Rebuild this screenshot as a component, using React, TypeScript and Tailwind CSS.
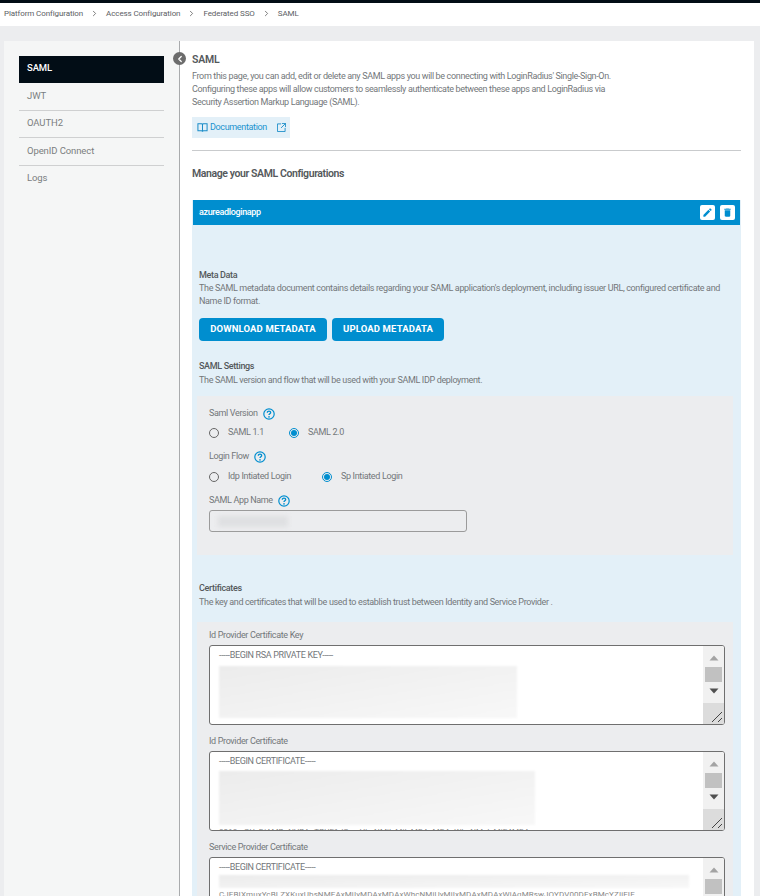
import React from "react";
import { ChevronRight, ChevronLeft } from "lucide-react";

const Help = () => (
  <svg width="12" height="12" viewBox="0 0 12 12" fill="none" className="shrink-0">
    <circle cx="6" cy="6" r="5.2" stroke="#008ecf" strokeWidth="1.2" />
    <path d="M4.300 4.700c0-1 .7-1.600 1.700-1.600s1.700.6 1.700 1.400c0 1.200-1.700 1.300-1.700 2.500" stroke="#008ecf" strokeWidth="1.3" />
    <circle cx="6" cy="8.900" r=".8" fill="#008ecf" />
  </svg>
);

const Radio = ({ label, checked, w }: { label: string; checked?: boolean; w: string }) => (
  <div className={`flex items-center gap-[9px] ${w}`}>
    <span className={`flex h-[10px] w-[10px] shrink-0 items-center justify-center rounded-full border ${checked ? "border-[#008ecf]" : "border-[#666]"}`}>
      {checked && <span className="h-[6px] w-[6px] rounded-full bg-[#008ecf]" />}
    </span>
    <span>{label}</span>
  </div>
);

const Arrow = ({ up, dark }: { up?: boolean; dark?: boolean }) => (
  <svg width="10" height="6" viewBox="0 0 10 6">
    <path d={up ? "M5 0.5 9.500 5.500H.5Z" : "M.5.5H9.500L5 5.500Z"} fill={dark ? "#505050" : "#a3a3a3"} />
  </svg>
);

const Scroll = ({ corner = true }: { corner?: boolean }) => (
  <div className="flex w-[21px] shrink-0 flex-col bg-[#f1f1f1]">
    <div className="flex h-[21px] shrink-0 items-center justify-center pt-[3px]"><Arrow up /></div>
    <div className="mx-auto h-[15px] w-[17px] shrink-0 bg-[#c1c1c1]" />
    <div className="flex h-[21px] shrink-0 items-center justify-center pb-[3px]"><Arrow dark /></div>
    <div className="flex-1" />
    {corner && (
      <div className="flex h-[21px] shrink-0 items-end justify-end bg-[#dcdcdc] p-[1px]">
        <svg width="12" height="12" viewBox="0 0 12 12" fill="none" stroke="#444" strokeWidth="1">
          <path d="M1 11 11 1M7 11l4-4" />
        </svg>
      </div>
    )}
  </div>
);

const Cert = ({ title, head, h, corner, blurTop, blurH, blurW, extra }: { title: string; head: string; h: string; corner?: boolean; blurTop: string; blurH: string; blurW: string; extra?: string }) => (
  <div className="flex flex-col">
    <div className="h-[13px] leading-[13px]">{title}</div>
    <div className={`mt-[3px] flex ${h} w-[516px] shrink-0 overflow-hidden rounded-[3px] border border-[#6f6f6f] bg-white`}>
      <div className="min-w-0 flex-1 overflow-hidden pl-[9px] pt-[3px] leading-[13px]">
        <div>{head}</div>
        <div className={`${blurTop} ${blurH} ${blurW} bg-gradient-to-br from-[#ececec] to-[#f8f8f8] blur-[1px]`} />
        {extra && <div className="mt-[2px] whitespace-nowrap text-[8px] leading-[10px] tracking-[0.1px] text-[#888]">{extra}</div>}
      </div>
      <Scroll corner={corner} />
    </div>
  </div>
);

export default function App() {
  const font = { fontFamily: 'Roboto, "Liberation Sans", sans-serif' };
  return (
    <div style={font} className="flex h-[896px] w-[760px] flex-col overflow-hidden bg-[#ecedef] text-[9px] tracking-[-0.35px] text-[#73777a]">
      <div className="h-[3px] shrink-0 bg-[#020d16]" />
      <div className="flex h-[23px] shrink-0 items-center bg-white pl-[4px] pb-[2px] text-[8px] tracking-[-0.1px] text-[#5c6064]">
        <span>Platform Configuration</span>
        <ChevronRight size={9} className="mx-[7px] text-[#555]" />
        <span>Access Configuration</span>
        <ChevronRight size={9} className="mx-[7px] text-[#555]" />
        <span>Federated SSO</span>
        <ChevronRight size={9} className="mx-[7px] text-[#555]" />
        <span>SAML</span>
      </div>
      <div className="flex min-h-0 flex-1 pl-[4px] pr-[6px] pt-[15px]">
        <aside className="relative w-[176px] shrink-0 border-r border-[#a9abad] bg-[#f5f6f6] px-[15px] pt-[15px] text-[9.5px] tracking-[-0.1px] text-[#7b7e80]">
          <div className="flex h-[27px] items-center bg-[#020d16] pb-[2px] pl-[8px] font-medium text-white">SAML</div>
          <div className="flex h-[28px] items-center border-b border-[#cfd0d1] pl-[8px]">JWT</div>
          <div className="flex h-[27px] items-center border-b border-[#cfd0d1] pb-[2px] pl-[8px]">OAUTH2</div>
          <div className="flex h-[28px] items-center border-b border-[#cfd0d1] pl-[8px]">OpenID Connect</div>
          <div className="flex h-[27px] items-center pb-[2px] pl-[8px]">Logs</div>
          <div className="absolute right-[-7px] top-[11px] flex h-[13px] w-[13px] items-center justify-center rounded-full bg-[#6c6c6c]">
            <ChevronLeft size={10} strokeWidth={3} className="text-white" />
          </div>
        </aside>
        <main className="min-w-0 flex-1 bg-white pl-[12px] pr-[13px] pt-[12px]">
          <div className="text-[10.5px] font-semibold leading-[14px] tracking-[-0.2px] text-[#54585b]">SAML</div>
          <p className="mt-[3px] leading-[13px]">
            From this page, you can add, edit or delete any SAML apps you will be connecting with LoginRadius' Single-Sign-On.<br />
            Configuring these apps will allow customers to seamlessly authenticate between these apps and LoginRadius via<br />
            Security Assertion Markup Language (SAML).
          </p>
          <div className="mt-[8px] flex h-[21px] w-[98px] items-center bg-[#e3f0f8] pl-[5px] text-[#1a93cf]">
            <svg className="shrink-0" width="11" height="11" viewBox="0 0 24 24" fill="none" stroke="#1a8cc8" strokeWidth="2.2">
              <path d="M2 4h8c1.200 0 2 .8 2 2v15c0-1-.8-2-2-2H2zM22 4h-8c-1.200 0-2 .8-2 2v15c0-1 .8-2 2-2h8z" />
            </svg>
            <span className="ml-[2px] pt-[1px]">Documentation</span>
            <svg className="ml-[10px] shrink-0" width="9" height="9" viewBox="0 0 10 10" fill="none" stroke="#1a8cc8" strokeWidth="1">
              <path d="M4.500 1H.5v8.500H9V5.500M5.500.5h4v4M9.500.5 4.500 5.500" />
            </svg>
          </div>
          <div className="mt-[12px] h-px w-[549px] bg-[#c9cbcd]" />
          <div className="mt-[16px] text-[10.5px] font-semibold leading-[14px] tracking-[-0.4px] text-[#54585b]">Manage your SAML Configurations</div>
          <section className="mt-[19px] w-[549px] bg-[#e3f0f8]">
            <div className="ml-px flex h-[25px] w-[547px] items-center justify-between bg-[#008ecf] pl-[6px] pr-[5px] font-medium text-white">
              <span>azureadloginapp</span>
              <div className="flex gap-[5px]">
                <span className="flex h-[15px] w-[15px] items-center justify-center rounded-[2px] bg-white">
                  <svg width="11" height="11" viewBox="0 0 24 24" fill="#008ecf"><path d="M3 17.250V21h3.750L17.810 9.940l-3.750-3.750zM20.710 7.040a1 1 0 0 0 0-1.410l-2.340-2.340a1 1 0 0 0-1.410 0l-1.830 1.830 3.750 3.750z" /></svg>
                </span>
                <span className="flex h-[15px] w-[15px] items-center justify-center rounded-[2px] bg-white">
                  <svg width="11" height="11" viewBox="0 0 24 24" fill="#008ecf"><path d="M6 19c0 1.100.9 2 2 2h8c1.100 0 2-.9 2-2V7H6zM19 4h-3.500l-1-1h-5l-1 1H5v2h14z" /></svg>
                </span>
              </div>
            </div>
            <div className="pl-[7px] pt-[44px]">
              <div className="font-medium leading-[13px] text-[#54585b]">Meta Data</div>
              <p className="leading-[13px]">
                The SAML metadata document contains details regarding your SAML application's deployment, including issuer URL, configured certificate and<br />
                Name ID format.
              </p>
              <div className="mt-[10px] flex gap-[5px]">
                <div className="flex h-[23px] w-[128px] items-center justify-center rounded-[4px] bg-[#008ecf] text-[9.5px] font-bold tracking-[0.15px] text-white">DOWNLOAD METADATA</div>
                <div className="flex h-[23px] w-[112px] items-center justify-center rounded-[4px] bg-[#008ecf] text-[9.5px] font-bold tracking-[0.15px] text-white">UPLOAD METADATA</div>
              </div>
              <div className="mt-[19px] font-medium leading-[13px] text-[#54585b]">SAML Settings</div>
              <p className="mt-[1px] leading-[13px]">The SAML version and flow that will be used with your SAML IDP deployment.</p>
            </div>
            <div className="ml-[5px] mr-[8px] mt-[9px] h-[159px] bg-[#ecedef] pl-[12px] pt-[11px]">
              <div className="flex h-[13px] items-center gap-[5px]">Saml Version <Help /></div>
              <div className="mt-[6px] flex h-[13px] items-center">
                <Radio label="SAML 1.1" w="w-[80px]" />
                <Radio label="SAML 2.0" checked w="w-[90px]" />
              </div>
              <div className="mt-[11px] flex h-[13px] items-center gap-[5px]">Login Flow <Help /></div>
              <div className="mt-[7px] flex h-[13px] items-center">
                <Radio label="Idp Intiated Login" w="w-[113px]" />
                <Radio label="Sp Intiated Login" checked w="w-[100px]" />
              </div>
              <div className="mt-[11px] flex h-[13px] items-center gap-[5px]">SAML App Name <Help /></div>
              <div className="mt-[3px] flex h-[22px] w-[258px] items-center rounded-[3px] border border-[#9b9b9b] pl-[8px]">
                <div className="h-[11px] w-[70px] bg-[#dfe0e2] blur-[2px]" />
              </div>
            </div>
            <div className="pl-[7px] pt-[27px]">
              <div className="font-medium leading-[13px] text-[#54585b]">Certificates</div>
              <p className="mt-[1px] leading-[13px]">The key and certificates that will be used to establish trust between Identity and Service Provider .</p>
            </div>
            <div className="ml-[5px] mr-[8px] mt-[13px] flex flex-col gap-[10px] bg-[#ecedef] pl-[12px] pt-[7px]">
              <Cert title="Id Provider Certificate Key" head="-----BEGIN RSA PRIVATE KEY-----" h="h-[80px]" corner blurTop="mt-[4px]" blurH="h-[52px]" blurW="w-[298px]" />
              <Cert title="Id Provider Certificate" head="-----BEGIN CERTIFICATE-----" h="h-[80px]" corner blurTop="mt-[3px]" blurH="h-[54px]" blurW="w-[316px]" extra="8018 aGUxDjAMBgNVBAoTBUF1dGgwHhcNMjIxMjIxMDAxMDAxWhcNMzIxMjE4MDAx" />
              <Cert title="Service Provider Certificate" head="-----BEGIN CERTIFICATE-----" h="h-[80px]" blurTop="mt-[1px]" blurH="h-[13px]" blurW="w-[470px]" extra="CJEBIXmuxYcBLZXKuxUbsNMEAxMjIyMDAxMDAxWhcNMjUyMjIxMDAxMDAxWjAgMRswJOYDV00DExBMcYZIjEIE" />
            </div>
          </section>
        </main>
      </div>
    </div>
  );
}
